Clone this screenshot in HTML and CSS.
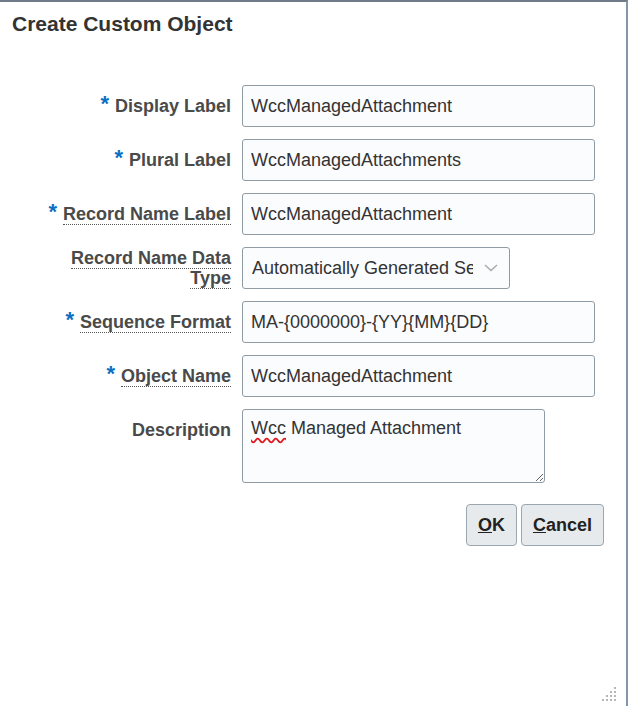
FILE: index.html
```html
<!DOCTYPE html>
<html>
<head>
<meta charset="utf-8">
<link rel="stylesheet" href="styles.css">
</head>
<body>
<div class="dialog">
  <h1 class="title">Create Custom Object</h1>
  <div class="form">
    <div class="label"><span class="req">*</span><span>Display Label</span></div>
    <input class="input" type="text" value="WccManagedAttachment">

    <div class="label"><span class="req">*</span><span>Plural Label</span></div>
    <input class="input" type="text" value="WccManagedAttachments">

    <div class="label"><span class="req">*</span><span class="dotted">Record Name Label</span></div>
    <input class="input" type="text" value="WccManagedAttachment">

    <div class="label"><span class="wrap"><span class="dotted">Record Name Data</span> <span class="dotted">Type</span></span></div>
    <div class="select">
      <span class="select-text">Automatically Generated Sequence</span>
      <svg class="chev" width="14" height="8" viewBox="0 0 14 8"><polyline points="1,1 7,6.5 13,1" fill="none" stroke="#a8a8a8" stroke-width="1.4"/></svg>
    </div>

    <div class="label"><span class="req">*</span><span class="dotted">Sequence Format</span></div>
    <input class="input" type="text" value="MA-{0000000}-{YY}{MM}{DD}">

    <div class="label"><span class="req">*</span><span class="dotted">Object Name</span></div>
    <input class="input" type="text" value="WccManagedAttachment">

    <div class="label label-top"><span>Description</span></div>
    <div class="textarea"><span class="spell">Wcc</span> Managed Attachment</div>
  </div>
  <div class="actions">
    <button class="btn" type="button"><u>O</u>K</button>
    <button class="btn" type="button"><u>C</u>ancel</button>
  </div>
  <div class="grip">
    <svg width="16" height="16" viewBox="0 0 16 16">
      <g fill="#b3b8bd">
        <rect x="12" y="0" width="2" height="2"/>
        <rect x="8" y="4" width="2" height="2"/><rect x="12" y="4" width="2" height="2"/>
        <rect x="4" y="8" width="2" height="2"/><rect x="8" y="8" width="2" height="2"/><rect x="12" y="8" width="2" height="2"/>
        <rect x="0" y="12" width="2" height="2"/><rect x="4" y="12" width="2" height="2"/><rect x="8" y="12" width="2" height="2"/><rect x="12" y="12" width="2" height="2"/>
      </g>
    </svg>
  </div>
</div>
</body>
</html>
```

FILE: styles.css
```css
html, body {
  margin: 0;
  padding: 0;
  background: #ffffff;
}

body {
  font-family: "Liberation Sans", Arial, sans-serif;
}

.dialog {
  width: 628px;
  height: 706px;
  box-sizing: border-box;
  border-top: 2px solid #6f7b88;
  border-right: 2px solid #8397aa;
  background: #ffffff;
  display: flex;
  flex-direction: column;
}

.title {
  margin: 0;
  padding: 10px 0 0 12px;
  font-size: 21px;
  line-height: 24px;
  font-weight: bold;
  color: #333333;
}

.form {
  margin-top: 49px;
  display: grid;
  grid-template-columns: 219px auto;
  column-gap: 11px;
  row-gap: 12px;
  padding-left: 12px;
  align-items: center;
}

.label {
  display: flex;
  justify-content: flex-end;
  align-items: center;
  text-align: right;
  font-size: 18px;
  line-height: 20px;
  font-weight: bold;
  color: #4a4a4a;
  white-space: nowrap;
}

.label-top {
  align-self: start;
  padding-top: 11px;
}

.wrap {
  white-space: normal;
  max-width: 170px;
}

.dotted {
  border-bottom: 1px dotted #555555;
}

.req {
  color: #0d6fc4;
  font-size: 22px;
  line-height: 20px;
  margin-right: 6px;
  align-self: flex-start;
  margin-top: -2px;
}

.input {
  width: 353px;
  height: 42px;
  box-sizing: border-box;
  margin: 0;
  padding: 0 8px;
  border: 1px solid #8f9ca6;
  border-radius: 3px;
  background: #fbfcfe;
  font-family: "Liberation Sans", Arial, sans-serif;
  font-size: 18px;
  color: #333333;
  outline: none;
}

.select {
  width: 268px;
  height: 42px;
  box-sizing: border-box;
  border: 1px solid #8f9ca6;
  border-radius: 3px;
  background: #fbfcfe;
  display: flex;
  align-items: center;
  padding: 0 11px 0 9px;
  gap: 11px;
  font-size: 18px;
  color: #333333;
}

.select-text {
  flex: 1;
  overflow: hidden;
  white-space: nowrap;
}

.chev {
  flex: none;
}

.textarea {
  width: 303px;
  height: 74px;
  box-sizing: border-box;
  padding: 8px;
  border: 1px solid #8f9ca6;
  border-radius: 3px;
  background: #fbfcfe;
  font-size: 18px;
  color: #333333;
  resize: both;
  overflow: auto;
}

.spell {
  text-decoration: underline wavy #e0191e;
  text-decoration-skip-ink: none;
  text-underline-offset: 3px;
}

.actions {
  display: flex;
  justify-content: flex-end;
  gap: 4px;
  margin-top: 21px;
  padding-right: 22px;
}

.btn {
  height: 42px;
  margin: 0;
  padding: 0 11px;
  border: 1px solid #9aa6b0;
  border-radius: 4px;
  background: #e6eaed;
  font-family: "Liberation Sans", Arial, sans-serif;
  font-size: 18px;
  font-weight: bold;
  color: #222222;
}

.grip {
  margin-top: auto;
  align-self: flex-end;
  margin-right: 8px;
  margin-bottom: 3px;
  line-height: 0;
}
```
